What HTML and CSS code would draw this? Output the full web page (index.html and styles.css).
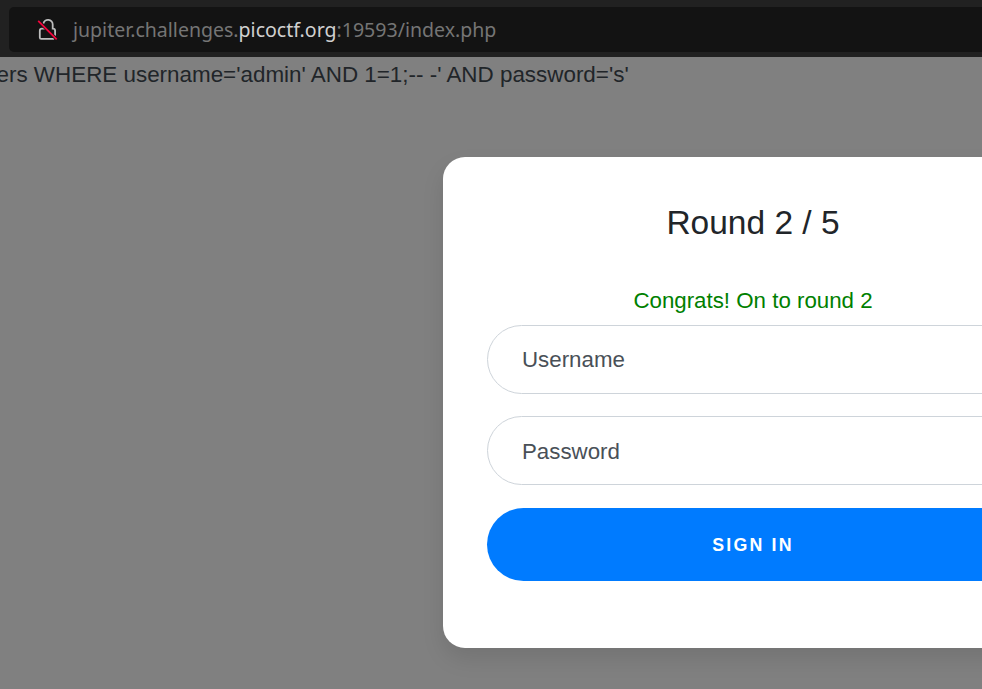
FILE: index.html
```html
<!DOCTYPE html>
<html lang="en">
<head>
<meta charset="utf-8">
<title>Login</title>
<link rel="stylesheet" href="styles.css">
</head>
<body>
<header class="toolbar">
  <div class="address">
    <svg class="lock" width="22" height="24" viewBox="0 0 22 24" fill="none">
      <path d="M6.4 5.6A4.7 4.7 0 0 1 15.7 6.6v4h.2a2.2 2.2 0 0 1 2.2 2.2v5M10 10.6H5a2.2 2.2 0 0 0-2.2 2.2v6.6a1.4 1.4 0 0 0 1.4 1.4h13" stroke="#bdbdbd" stroke-width="1.8"/>
      <path d="M1.2 2.9 19.7 21.4" stroke="#131313" stroke-width="3.2"/>
      <path d="M1.2 2.9 19.7 21.4" stroke="#f5043c" stroke-width="1.8"/>
    </svg>
    <span class="url">jupiter.challenges.<span class="domain">picoctf.org</span>:19593/index.php</span>
  </div>
</header>
<main class="page">
  <p class="query"><span>ers WHERE username='admin' AND 1=1;-- -' AND password='s'</span></p>
  <section class="card">
    <h1 class="title">Round 2 / 5</h1>
    <p class="notice">Congrats! On to round 2</p>
    <form class="form">
      <input class="field" type="text" placeholder="Username" aria-label="Username">
      <input class="field field-password" type="password" placeholder="Password" aria-label="Password">
      <button class="submit" type="button">Sign in</button>
    </form>
  </section>
</main>
</body>
</html>
```
FILE: styles.css
```css
* { box-sizing: border-box; }
body {
  margin: 0;
  height: 689px;
  overflow: hidden;
  background: #808080;
  color: #212529;
  font: 22.3px/33px "Liberation Sans", Arial, sans-serif;
}
.toolbar {
  height: 57px;
  padding: 7px 0 5px 9px;
  background: #212121;
}
.address {
  display: flex;
  align-items: center;
  height: 45px;
  padding-left: 28px;
  border-radius: 5px 0 0 5px;
  background: #131313;
}
.lock { flex: none; margin-right: 14px; }
.url {
  color: #757575;
  font: 19.55px/27px "Noto Sans", sans-serif;
  white-space: nowrap;
}
.domain { color: #d0d0d0; }
.query {
  margin: 0 0 0 -3.5px;
  padding-top: 1px;
  height: 100px;
  font-size: 22.42px;
  white-space: nowrap;
}
.card {
  width: 620px;
  height: 491px;
  margin-left: 443px;
  padding: 46px 44px 0;
  border-radius: 22px;
  background: #fff;
  box-shadow: 0 11px 22px rgba(0, 0, 0, .1);
}
.title {
  margin: 0 0 41px;
  font-size: 33.5px;
  font-weight: 400;
  line-height: 40px;
  text-align: center;
}
.notice {
  margin: 0 0 8px;
  color: #008000;
  text-align: center;
}
.form { display: flex; flex-direction: column; }
.field {
  height: 69px;
  margin-bottom: 22px;
  padding: 0 34px;
  border: 1px solid #ced4da;
  border-radius: 35px;
  background: #fff;
  font: inherit;
}
.field-password { padding-top: 2px; }
.field::placeholder { color: #495057; opacity: 1; }
.submit {
  height: 73px;
  margin-top: 1px;
  padding: 0;
  border: 0;
  border-radius: 37px;
  background: #007bff;
  color: #fff;
  font: bold 17.8px/26px "Liberation Sans", Arial, sans-serif;
  letter-spacing: 2.2px;
  text-transform: uppercase;
}
```
